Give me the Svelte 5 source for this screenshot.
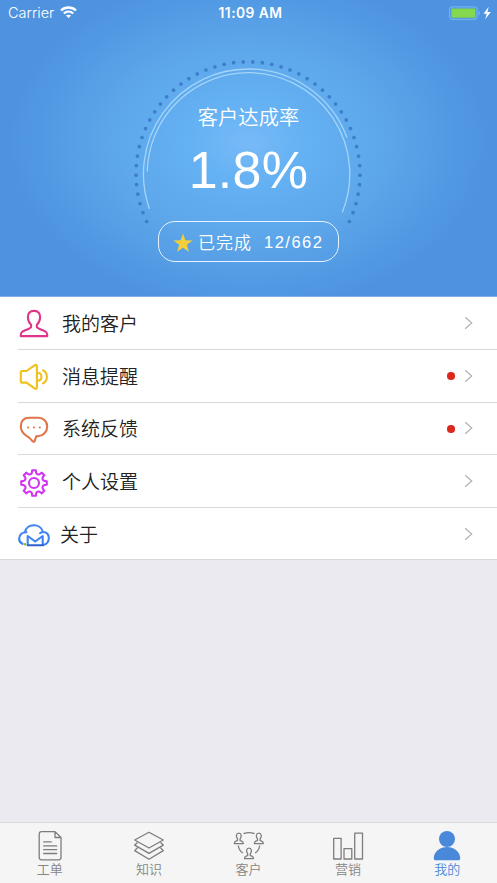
<script>
	const rows = [
		{ icon: 'person', text: '我的客户' },
		{ icon: 'speaker', text: '消息提醒', dot: true },
		{ icon: 'bubble', text: '系统反馈', dot: true },
		{ icon: 'gear', text: '个人设置' },
		{ icon: 'cloud', text: '关于' }
	];

	const tabs = [
		{ icon: 'doc', text: '工单' },
		{ icon: 'layers', text: '知识' },
		{ icon: 'people', text: '客户' },
		{ icon: 'bars', text: '营销' },
		{ icon: 'me', text: '我的', active: true }
	];

	const people = [
		[5.8, 3.2],
		[25.8, 3.2],
		[16, 18.2]
	];

	// dots run clockwise from lower left to lower right
	const dots = Array.from({ length: 48 }, (_, i) => {
		const a = ((205.2 - 230.4 * (i / 47)) * Math.PI) / 180;
		return { x: 118 + 112 * Math.cos(a), y: 117.8 - 112 * Math.sin(a) };
	});

	// 8 teeth, notches rounded inwards
	const point = (deg, r) => {
		const a = (deg * Math.PI) / 180;
		return `${(15 + r * Math.sin(a)).toFixed(2)} ${(15 - r * Math.cos(a)).toFixed(2)}`;
	};
	const teeth = [0, 45, 90, 135, 180, 225, 270, 315].map(
		(t) => `L${point(t - 12, 10.4)}L${point(t - 8, 12.9)}L${point(t + 8, 12.9)}L${point(t + 12, 10.4)}A2.6 2.6 0 0 0 ${point(t + 33, 10.4)}`
	);
	const gear = `M${point(-12, 10.4)}${teeth.join('')}Z`;
</script>

<div class="screen">
	<header>
		<div class="status">
			<div class="carrier">
				<span>Carrier</span>
				<svg width="17" height="13" viewBox="0 0 17 13" fill="none" stroke="#fff" stroke-width="2.3">
					<path d="M1 4.5C5.2.5 11.8.5 16 4.5" />
					<path d="M3.8 7.5c2.7-2.5 6.7-2.5 9.4 0" />
					<path d="M8.5 12 5.9 9.6c1.5-1.3 3.7-1.3 5.2 0z" fill="#fff" stroke="none" />
				</svg>
			</div>
			<div class="time">11:09 AM</div>
			<div class="power">
				<svg width="44" height="14" viewBox="0 0 44 14">
					<rect x="1.6" y=".8" width="27.4" height="12.6" rx="2.8" fill="none" stroke="#6bb4ef" stroke-width="1.2" />
					<rect x="3.4" y="2.5" width="24" height="9.2" rx="1" fill="#83d84e" />
					<path d="M30.3 4.8c2.1.8 2.1 4 0 4.8z" fill="#6bb4ef" />
					<path d="M40.7.8 35.5 7.7h3.2l-1.5 5.5L42.800 6h-3.400z" fill="#fff" />
				</svg>
			</div>
		</div>

		<div class="gauge">
			<svg class="dial" width="236" height="170" viewBox="0 0 236 170">
				{#each dots as dot}
					<circle cx={dot.x} cy={dot.y} r="1.85" fill="#3f7dcb" />
				{/each}
				<g fill="none" stroke="#a4d4f9" stroke-width="1.3" stroke-linecap="round">
					<path d="M19.3 152.5A105 105 0 0 1 118.5 13 105 105 0 0 1 216.8 81.2" />
					<path d="M17.25 115A101.3 101.3 0 0 1 118.5 16.7 101.3 101.3 0 0 1 212.4 156" />
				</g>
			</svg>
			<div class="label">客户达成率</div>
			<div class="rate">1.8%</div>
		</div>

		<div class="badge">
			<svg width="20" height="20" viewBox="0 0 20 20">
				<path d="m10 .5 2.4 6.8 7.2.1-5.8 4.4 2.1 7L10 14.7l-5.9 4.1 2.1-7L.4 7.4l7.2-.1z" fill="#f3cf3b" />
			</svg>
			<span class="done">已完成</span>
			<span class="count">12/662</span>
		</div>
	</header>

	<ul class="list">
		{#each rows as row}
			<li>
				<div class="row-icon">
					{#if row.icon === 'person'}
						<svg width="30" height="30" viewBox="0 0 30 30" stroke="#e0348a">
							<path d="M15 1.900c-4.200 0-6.400 2.600-6.100 6.600.2 3.400 1.300 5.600 3.200 7.200v2.100c-.2 1.600-3.600 2.400-7 3.900-2.700 1-3.400 2-3.400 5.400h26.600c0-3.400-.7-4.400-3.400-5.400-3.400-1.500-6.800-2.300-7-3.900v-2.100c1.900-1.600 3-3.800 3.200-7.200.3-4-1.900-6.600-6.100-6.600z" />
						</svg>
					{:else if row.icon === 'speaker'}
						<svg width="30" height="30" viewBox="0 0 30 30" stroke="#efc11d">
							<path d="M3 9h4.5l8-5.600Q17.900 2 17.900 4.500v20.700q0 2.500-2.400 1.100l-8-5.700H3q-1.200 0-1.200-1.200v-9.200Q1.800 9 3 9z" />
							<path d="M19.200 11q3.200 0 3.200 3.800t-3.200 3.800M24 8.300c5.200 2.400 5.200 10.600 0 13" />
						</svg>
					{:else if row.icon === 'bubble'}
						<svg width="30" height="30" viewBox="0 0 30 30" stroke="#e17549">
							<path d="M10.500 2.800h9c4.800 0 8.700 3.700 8.700 8.600 0 5.500-4 9.600-9.500 9.800h-1.400L15.700 26q-.7 1.500-2 .3-2.500-3.500-6.800-6Q1.800 17 1.800 11.300q0-8.500 8.700-8.500z" />
							<g fill="#e17549" stroke="none">
								<circle cx="9.200" cy="12.500" r="1.100" />
								<circle cx="15" cy="12.500" r="1.100" />
								<circle cx="20.800" cy="12.500" r="1.100" />
							</g>
						</svg>
					{:else if row.icon === 'gear'}
						<svg width="30" height="30" viewBox="0 0 30 30" stroke="#d233f2">
							<path d={gear} />
							<circle cx="15" cy="15" r="5" />
						</svg>
					{:else}
						<svg width="32" height="30" viewBox="0 0 32 30" stroke="#3e83f4">
							<path d="M4.500 23.800C2.300 22.800 1 20.800 1.200 18.300c.2-3.800 3-6.300 7.300-6M7 12C8.500 3.500 22.500 2.500 25 12c3.800 0 6 2.700 5.800 6.200-.1 3.800-2.300 6.100-5.300 6.500M25 12q-1.800.2-3 1.200" />
							<path d="M9.700 24.500V16l7.500 5.500 7.500-5.500v8.500" />
							<path d="M9.700 25.200h15.500" stroke="#2d62d3" />
							<circle cx="7" cy="24.200" r="1.300" fill="#8fbd20" stroke="none" />
						</svg>
					{/if}
				</div>
				<span class="row-text" class:tight={row.icon === 'cloud'}>{row.text}</span>
				{#if row.dot}
					<i class="dot"></i>
				{/if}
				<svg class="chevron" width="9" height="14" viewBox="0 0 9 14" stroke="#b4b4b8">
					<path d="m1.200 1.300 6.500 5.700-6.500 5.700" />
				</svg>
			</li>
		{/each}
	</ul>

	<nav>
		{#each tabs as tab}
			<div class="tab" class:active={tab.active}>
				<svg width="32" height="32" viewBox="0 0 32 32">
					{#if tab.icon === 'doc'}
						<path d="M7.500 1.600H21l6 5.900v19.800q0 2.500-2.500 2.500h-17q-2.300 0-2.300-2.500V4.100q0-2.500 2.300-2.500zM21 1.600v5.900h6M9.200 11.800h8.500M9.200 15.800h14M9.200 19.600h14M9.200 23.500h14" />
					{:else if tab.icon === 'layers'}
						<path d="m16 2.300 14.300 7.700L16 18 1.700 10z" />
						<path d="m4.500 12.500-2.800 2.600L16 23.400l14.300-8.300-2.800-2.600M4.500 17.800l-2.800 2.800L16 29.300l14.300-8.700-2.800-2.800" />
					{:else if tab.icon === 'people'}
						{#each people as [x, y]}
							<path
								transform={`translate(${x} ${y})`}
								d="M0 0c-2.900 0-3 3.500-1.300 5.700v1.500C-2.200 8-4.500 7.800-4.500 10.400h9C4.500 7.800 2.200 8 1.300 7.200V5.700C3 3.500 2.900 0 0 0z"
							/>
						{/each}
						<path d="M10.500 3.700q5.500-2.200 11 0M5.300 15.500q.5 4.800 4.600 7.500M26.700 15.500q-.5 4.800-4.600 7.500" />
					{:else if tab.icon === 'bars'}
						<path d="M1.700 8.300h7.400V29H1.700zM12 18.700h7.800V29H12zM22.700 3.200h7.800V29h-7.800z" />
					{:else}
						<circle cx="16" cy="9" r="8" />
						<path d="M2.800 27.400c.7-6 6.200-10.400 13.200-10.400s12.500 4.400 13.200 10.400q.3 2.800-1.900 2.800H4.700q-2.200 0-1.900-2.800z" />
					{/if}
				</svg>
				<span>{tab.text}</span>
			</div>
		{/each}
	</nav>
</div>

<style>
	:global(body) {
		margin: 0;
	}

	.screen {
		display: flex;
		flex-direction: column;
		width: 497px;
		height: 883px;
		overflow: hidden;
		background: #ebeaf0;
		font-family: 'Liberation Sans', 'Noto Sans CJK SC', sans-serif;
	}

	header {
		display: flex;
		flex-direction: column;
		align-items: center;
		height: 297px;
		box-sizing: border-box;
		color: #fff;
		border-bottom: 1px solid #7fb1e4;
		background: radial-gradient(
			ellipse 240px 168px at 248px 142px,
			#78baf8 0,
			#64b1f3 24%,
			#5ca5e9 60%,
			#5198e3 88%,
			#4f93e0 100%
		);
	}

	.status {
		display: grid;
		grid-template-columns: 1fr auto 1fr;
		align-items: center;
		width: 100%;
		height: 25px;
		box-sizing: border-box;
		padding: 0 5px 0 8px;
		font: 14.5px Inter, sans-serif;
	}

	.carrier {
		display: flex;
		align-items: center;
		gap: 6px;
		font-weight: 300;
	}

	.time {
		padding-left: 1px;
		font-size: 13.8px;
		font-weight: 600;
		letter-spacing: 0.45px;
	}

	.power {
		display: flex;
		justify-content: flex-end;
	}

	.gauge {
		position: relative;
		width: 236px;
		height: 165px;
		margin-top: 31px;
		text-align: center;
	}

	.dial {
		position: absolute;
		left: -0.5px;
		top: 0;
	}

	.label {
		padding-top: 46px;
		font-size: 20.3px;
		font-weight: 350;
		line-height: 32px;
	}

	.rate {
		margin-top: 6px;
		font-size: 52px;
		line-height: 60px;
		letter-spacing: 0.3px;
	}

	.badge {
		display: flex;
		align-items: center;
		width: 181px;
		height: 41px;
		box-sizing: border-box;
		padding-left: 14px;
		border: 1.5px solid #e8f3fd;
		border-radius: 17px;
	}

	.badge svg {
		margin-top: 2px;
	}

	.done {
		margin-left: 5px;
		font-size: 17px;
		font-weight: 350;
		letter-spacing: 1px;
	}

	.count {
		margin-left: 12px;
		padding-top: 2px;
		font-size: 16.5px;
		letter-spacing: 1.5px;
	}

	.list {
		margin: 0;
		padding: 0;
		list-style: none;
		background: #fff;
		border-bottom: 1px solid #d6d6dc;
	}

	li {
		display: flex;
		align-items: center;
		height: 52.8px;
		box-sizing: border-box;
		margin-left: 18px;
		padding-right: 24px;
		border-bottom: 1px solid #d8d8dd;
	}

	li:last-child {
		height: 50.8px;
		border-bottom: 0;
	}

	.row-icon {
		display: flex;
		width: 32px;
		margin-right: 12px;
		justify-content: center;
		padding-top: 3px;
	}

	.row-icon svg {
		fill: none;
		stroke-width: 2.1;
		stroke-linejoin: round;
		stroke-linecap: round;
	}

	.row-text {
		flex: 1;
		padding-top: 4px;
		color: #222;
		font-size: 19px;
		font-weight: 350;
		line-height: 28px;
	}

	.tight {
		margin-left: -2px;
	}

	.dot {
		width: 7.5px;
		height: 7.5px;
		margin: 1px 9.5px 0 0;
		border-radius: 50%;
		background: #dc291e;
	}

	.chevron {
		fill: none;
		stroke-width: 1.3;
	}

	nav {
		display: flex;
		height: 61px;
		margin-top: auto;
		box-sizing: border-box;
		border-top: 1px solid #d9d9dd;
		background: #f5f5f5;
	}

	.tab {
		display: flex;
		flex: 1;
		flex-direction: column;
		align-items: center;
		padding-top: 7px;
		color: #858585;
		font-size: 13px;
		font-weight: 350;
		line-height: 16px;
	}

	.tab svg {
		fill: none;
		stroke: #7d7d7d;
		stroke-width: 1.3;
		stroke-linejoin: round;
	}

	.active {
		color: #4a89da;
	}

	.active svg {
		fill: #4a89da;
		stroke: none;
	}
</style>
